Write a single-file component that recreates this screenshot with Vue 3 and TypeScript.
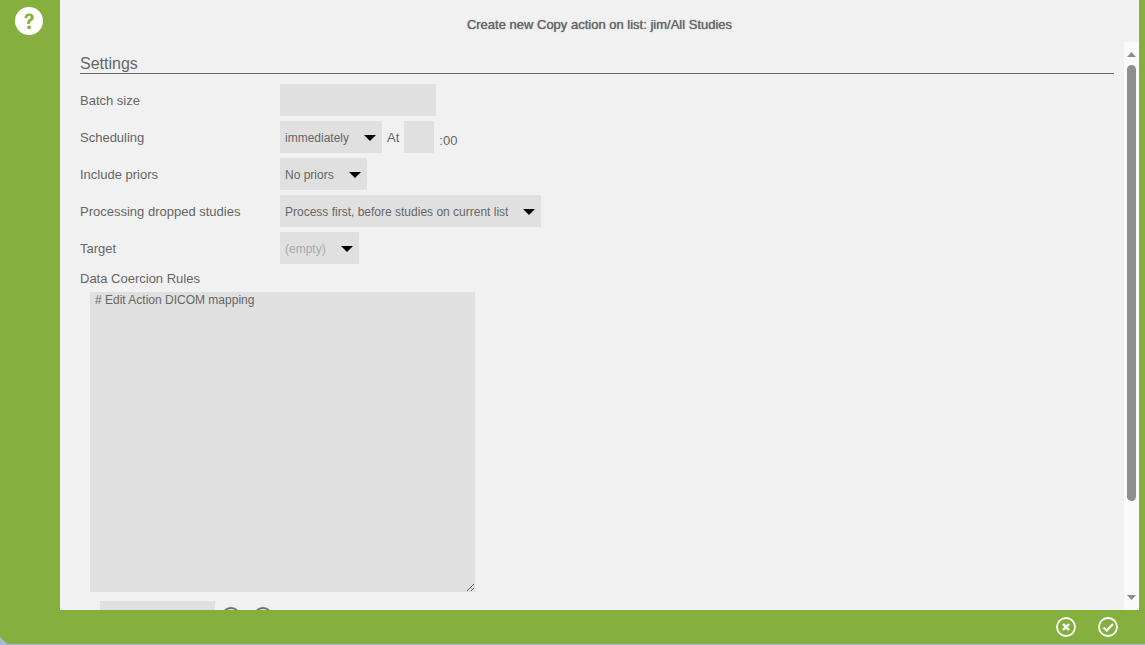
<script setup lang="ts">
interface Row {
  label: string
  value?: string
  width: number
  muted?: boolean
}
const rows: Row[] = [
  { label: 'Scheduling', value: 'immediately', width: 102 },
  { label: 'Include priors', value: 'No priors', width: 87 },
  { label: 'Processing dropped studies', value: 'Process first, before studies on current list', width: 261 },
  { label: 'Target', value: '(empty)', width: 79, muted: true },
]
</script>

<template>
  <div class="page">
    <div class="frame">
      <div class="upper">
        <aside class="side">
          <svg class="help" viewBox="0 0 28 28" width="28" height="28">
            <circle cx="14" cy="14" r="14" fill="#fff" />
            <path d="M9.4 11.2c.1-3 2.1-4.7 4.8-4.7 2.7 0 4.6 1.6 4.6 3.9 0 1.600-.8 2.600-2.200 3.500-1.200.8-1.500 1.200-1.500 2.300v.5h-3v-.8c0-1.700.6-2.600 2-3.500 1.100-.7 1.600-1.200 1.600-2.100 0-.9-.7-1.500-1.600-1.500-1 0-1.700.7-1.800 1.900z" fill="#85b040" />
            <circle cx="14.100" cy="20.300" r="1.900" fill="#85b040" />
          </svg>
        </aside>
        <main class="main">
          <h1 class="title">Create new Copy action on list: jim/All Studies</h1>
          <div class="scroller">
            <div class="content">
              <h2 class="section">Settings</h2>
              <div class="rows">
                <div class="row">
                  <label class="label">Batch size</label>
                  <input class="field batch" type="text" />
                </div>
                <div v-for="(row, i) in rows" :key="row.label" class="row">
                  <label class="label">{{ row.label }}</label>
                  <div class="select" :class="{ muted: row.muted }" :style="{ width: row.width + 'px' }">
                    <span>{{ row.value }}</span>
                    <svg class="caret" viewBox="0 0 12 6" width="12" height="6"><path d="M0 0h12L6 6z" fill="#000" /></svg>
                  </div>
                  <template v-if="i === 0">
                    <span class="at">At</span>
                    <input class="field hour" type="text" />
                    <span class="min">:00</span>
                  </template>
                </div>
              </div>
              <div class="label coercion">Data Coercion Rules</div>
              <textarea class="rules" spellcheck="false"># Edit Action DICOM mapping</textarea>
              <div class="after">
                <div class="stub"></div>
                <svg class="ring" viewBox="0 0 20 20" width="20" height="20"><circle cx="10" cy="10" r="9" fill="none" stroke="#707070" stroke-width="1.800" /></svg>
                <svg class="ring" viewBox="0 0 20 20" width="20" height="20"><circle cx="10" cy="10" r="9" fill="none" stroke="#707070" stroke-width="1.800" /></svg>
              </div>
            </div>
            <div class="bar">
              <svg class="arrow up" viewBox="0 0 9 5" width="9" height="5"><path d="M4.500 0L9 5H0z" fill="#8c8c8c" /></svg>
              <div class="thumb"></div>
              <svg class="arrow down" viewBox="0 0 9 5" width="9" height="5"><path d="M0 0h9L4.500 5z" fill="#8c8c8c" /></svg>
            </div>
          </div>
        </main>
      </div>
      <footer class="foot">
        <svg viewBox="0 0 20 20" width="20" height="20">
          <circle cx="10" cy="10" r="9" fill="none" stroke="#fff" stroke-width="1.800" />
          <path d="M7 7l6 6M13 7l-6 6" stroke="#fff" stroke-width="2.400" fill="none" />
        </svg>
        <svg viewBox="0 0 20 20" width="20" height="20">
          <circle cx="10" cy="10" r="9" fill="none" stroke="#fff" stroke-width="1.800" />
          <path d="M5.500 10.500l3.200 3 6.300-6.500" stroke="#fff" stroke-width="2" fill="none" />
        </svg>
      </footer>
    </div>
  </div>
</template>

<style>
html, body { margin: 0; padding: 0; overflow: hidden; }
</style>

<style scoped>
.page {
  width: 1145px;
  height: 645px;
  background: #a3bcd3;
  font-family: "Liberation Sans", Arial, sans-serif;
  color: #666;
  overflow: hidden;
}
.frame {
  height: 644px;
  background: #85b040;
  display: flex;
  flex-direction: column;
  clip-path: polygon(0 637px, 7px 100%, 100% 100%, 100% 0, 0 0);
}
.upper {
  height: 610px;
  display: flex;
}
.side {
  width: 60px;
  flex: none;
  display: flex;
  justify-content: center;
  padding-top: 7px;
  box-sizing: border-box;
}
.help { margin-left: -2px; }
.main {
  width: 1079px;
  flex: none;
  background: #f1f1f1;
  display: flex;
  flex-direction: column;
  min-height: 0;
}
.title {
  margin: 0;
  height: 42px;
  padding-top: 17px;
  box-sizing: border-box;
  text-align: center;
  font-size: 13px;
  line-height: 15px;
  font-weight: 400;
  color: #666;
  text-shadow: 0 0 1px #666;
}
.scroller {
  flex: 1;
  display: flex;
  min-height: 0;
}
.content {
  flex: 1;
  min-width: 0;
  overflow: hidden;
  padding: 0 10px 0 20px;
}
.section {
  margin: 13px 0 0;
  height: 18px;
  border-bottom: 1px solid #666;
  font-size: 16px;
  line-height: 17px;
  font-weight: 400;
  color: #666;
}
.rows {
  margin-top: 10px;
  display: flex;
  flex-direction: column;
  gap: 5px;
}
.row {
  display: flex;
  align-items: center;
  height: 32px;
}
.label {
  font-size: 13px;
  line-height: 15px;
  color: #666;
}
.row .label {
  width: 200px;
  flex: none;
}
.field {
  height: 32px;
  box-sizing: border-box;
  border: 0;
  background: #e0e0e0;
  padding: 0;
  outline: none;
}
.batch { width: 156px; }
.hour { width: 30px; margin-left: 5px; }
.select {
  height: 32px;
  box-sizing: border-box;
  background: #e0e0e0;
  padding: 1px 6px 0 5px;
  display: flex;
  align-items: center;
  justify-content: space-between;
  font-size: 12px;
  color: #666;
}
.select.muted { color: #aaa; }
.caret { flex: none; }
.at {
  font-size: 13px;
  margin-left: 5px;
}
.min {
  font-size: 13px;
  margin: 7px 0 0 5px;
}
.coercion {
  margin-top: 7px;
}
.rules {
  display: block;
  width: 385px;
  height: 300px;
  margin: 6px 0 0 10px;
  box-sizing: border-box;
  border: 0;
  background: #e0e0e0;
  padding: 1px 5px;
  font-family: "Liberation Sans", Arial, sans-serif;
  font-size: 12px;
  line-height: 14px;
  color: #666;
  outline: none;
  overflow: hidden;
}
.after {
  margin: 9px 0 0 20px;
  display: flex;
  align-items: flex-start;
}
.stub {
  width: 115px;
  height: 32px;
  background: #e0e0e0;
}
.ring { margin: 6px 0 0 12px; }
.stub + .ring { margin-left: 6px; }
.bar {
  width: 15px;
  flex: none;
  background: #fafafa;
  display: flex;
  flex-direction: column;
  align-items: center;
  padding-top: 10px;
  box-sizing: border-box;
}
.arrow { flex: none; }
.thumb {
  width: 9px;
  height: 436px;
  margin-top: 8px;
  background: #8f8f8f;
  border-radius: 5px;
}
.down {
  margin-top: auto;
  margin-bottom: 10px;
}
.foot {
  flex: 1;
  display: flex;
  justify-content: flex-end;
  align-items: center;
  gap: 22px;
  padding: 0 27px 1px 0;
}
</style>
